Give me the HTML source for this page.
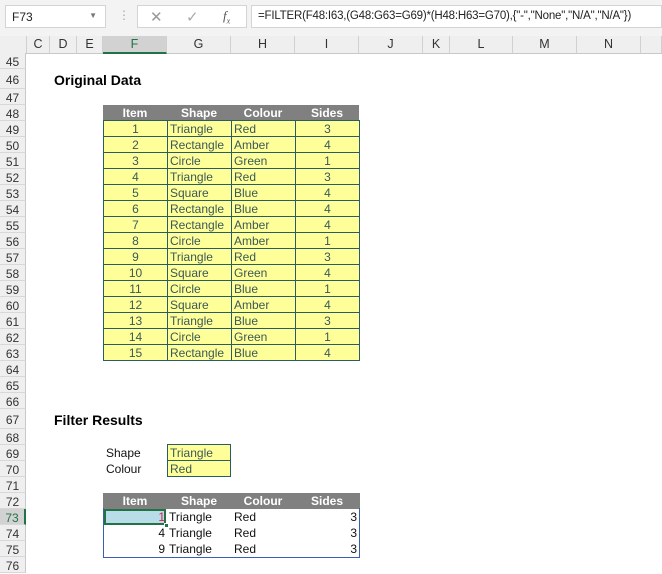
<!DOCTYPE html>
<html><head><meta charset="utf-8"><style>
html,body{margin:0;width:662px;height:574px;overflow:hidden}
body{background:#fff;font-family:"Liberation Sans",Arial,sans-serif;position:relative}
.a{position:absolute;box-sizing:border-box}
.top{left:0;top:0;width:662px;height:36px;background:#f3f3f3}
.nb{left:5px;top:5px;width:101px;height:23px;background:#fff;border:1px solid #d4d4d4;font-size:12px;padding:4px 0 0 6px;color:#222}
.fb{left:251px;top:5px;width:411px;height:23px;background:#fff;border:1px solid #d4d4d4;font-size:11.5px;letter-spacing:-0.2px;padding:4px 0 0 6px;color:#222;white-space:nowrap;overflow:hidden}
.ib{left:137px;top:5px;width:110px;height:23px;background:#fff;border:1px solid #d4d4d4}
.ch{top:36px;height:18px;background:#efefef;border-right:1px solid #d0d0d0;border-bottom:1px solid #c8c8c8;font-size:12.5px;color:#333;text-align:center;line-height:17px}
.rh{left:0;width:26px;background:#efefef;border-right:1px solid #c8c8c8;border-bottom:1px solid #d8d8d8;font-size:12px;color:#333;text-align:center}
.c{font-size:12px;height:16px;line-height:16px;white-space:nowrap;overflow:hidden}
.y{background:#ffff99;border:1px solid #2a5c63;margin:-1px 0 0 -1px;color:#3b5858;padding:0 2px}
.h{background:#808080;color:#fff;font-weight:bold;text-align:center}
.t{font-weight:bold;font-size:14px}
</style></head><body>
<div class="a top"></div>
<div class="a nb">F73<span style="position:absolute;right:8px;top:5px;font-size:8px;color:#777">▼</span></div>
<div class="a" style="left:118px;top:8px;color:#aaa;font-size:12px">⋮</div>
<div class="a ib"><span style="position:absolute;left:12px;top:2px;color:#999;font-size:15px">✕</span><span style="position:absolute;left:48px;top:2px;color:#aaa;font-size:15px">✓</span><span style="position:absolute;left:85px;top:2px;color:#555;font-size:13px;font-style:italic;font-family:'Liberation Serif',serif">f<sub style="font-size:8px">x</sub></span></div>
<div class="a fb">=FILTER(F48:I63,(G48:G63=G69)*(H48:H63=G70),{"-","None","N/A","N/A"})</div>
<div id="g"></div>
<script>
var cols=[["C",27,50],["D",50,77],["E",77,103],["F",103,167],["G",167,231],["H",231,295],["I",295,359],["J",359,423],["K",423,450],["L",450,513],["M",513,577],["N",577,641],["",641,662]];
var h='<div class="a ch" style="left:0;width:27px"></div>';
cols.forEach(c=>{h+='<div class="a ch" style="left:'+c[1]+'px;width:'+(c[2]-c[1])+'px;'+(c[0]=="F"?'background:#d2d2d2;border-bottom:2px solid #217346;color:#217346':'')+'">'+c[0]+'</div>'});
var ry={},y=53;
for(var r=45;r<=76;r++){var hh=(r==46||r==67)?20:16;ry[r]=y;h+='<div class="a rh" style="top:'+y+'px;height:'+hh+'px;line-height:'+(hh+2)+'px;'+(r==73?'background:#d2d2d2;color:#217346;border-right:2px solid #217346':'')+'">'+r+'</div>';y+=hh;}
function cell(x,w,r,t,cls,st){h+='<div class="a c '+cls+'" style="left:'+x+'px;top:'+ry[r]+'px;width:'+w+'px;'+(st||'')+'">'+t+'</div>';}
h+='<div class="a t" style="left:54px;top:'+(ry[46]+3)+'px">Original Data</div>';
h+='<div class="a t" style="left:54px;top:'+(ry[67]+3)+'px">Filter Results</div>';
var X=[103,167,231,295,359];
["Item","Shape","Colour","Sides"].forEach((t,i)=>cell(X[i],64,48,t,"h"));
var d=[[1,"Triangle","Red",3],[2,"Rectangle","Amber",4],[3,"Circle","Green",1],[4,"Triangle","Red",3],[5,"Square","Blue",4],[6,"Rectangle","Blue",4],[7,"Rectangle","Amber",4],[8,"Circle","Amber",1],[9,"Triangle","Red",3],[10,"Square","Green",4],[11,"Circle","Blue",1],[12,"Square","Amber",4],[13,"Triangle","Blue",3],[14,"Circle","Green",1],[15,"Rectangle","Blue",4]];
d.forEach((row,k)=>{row.forEach((t,i)=>cell(X[i]+1,65,49+k,t,"y",(i==0||i==3)?"text-align:center;height:17px":"height:17px"))});
cell(106,60,69,"Shape","","color:#111");cell(106,60,70,"Colour","","color:#111");
cell(168,64,69,"Triangle","y","height:17px");cell(168,64,70,"Red","y","height:17px");
h+='<div class="a" style="left:103px;top:'+ry[72]+'px;width:257px;height:16px;background:#808080"></div>';
[["Item",103,64],["Shape",167,64],["Colour",231,64],["Sides",295,64]].forEach(a=>cell(a[1],a[2],72,a[0],"h","background:none"));
h+='<div class="a" style="left:103px;top:'+(ry[73]-1)+'px;width:257px;height:50px;border:1px solid #3b5fae;border-top:none"></div>';
h+='<div class="a" style="left:104px;top:'+ry[73]+'px;width:62px;height:16px;background:#b8dce8;border:2px solid #217346"></div>';
h+='<div class="a" style="left:164px;top:'+(ry[73]+14)+'px;width:5px;height:5px;background:#217346;border:1px solid #fff"></div>';
[[1,"Triangle","Red",3],[4,"Triangle","Red",3],[9,"Triangle","Red",3]].forEach((row,k)=>{var r=73+k;
cell(103,62,r,row[0],"","text-align:right;color:"+(k==0?"#e0204a":"#111"));
cell(169,62,r,row[1],"","color:#111");cell(234,60,r,row[2],"","color:#111");cell(295,62,r,row[3],"","text-align:right;color:#111");});
document.getElementById("g").innerHTML=h;
</script>
</body></html>
